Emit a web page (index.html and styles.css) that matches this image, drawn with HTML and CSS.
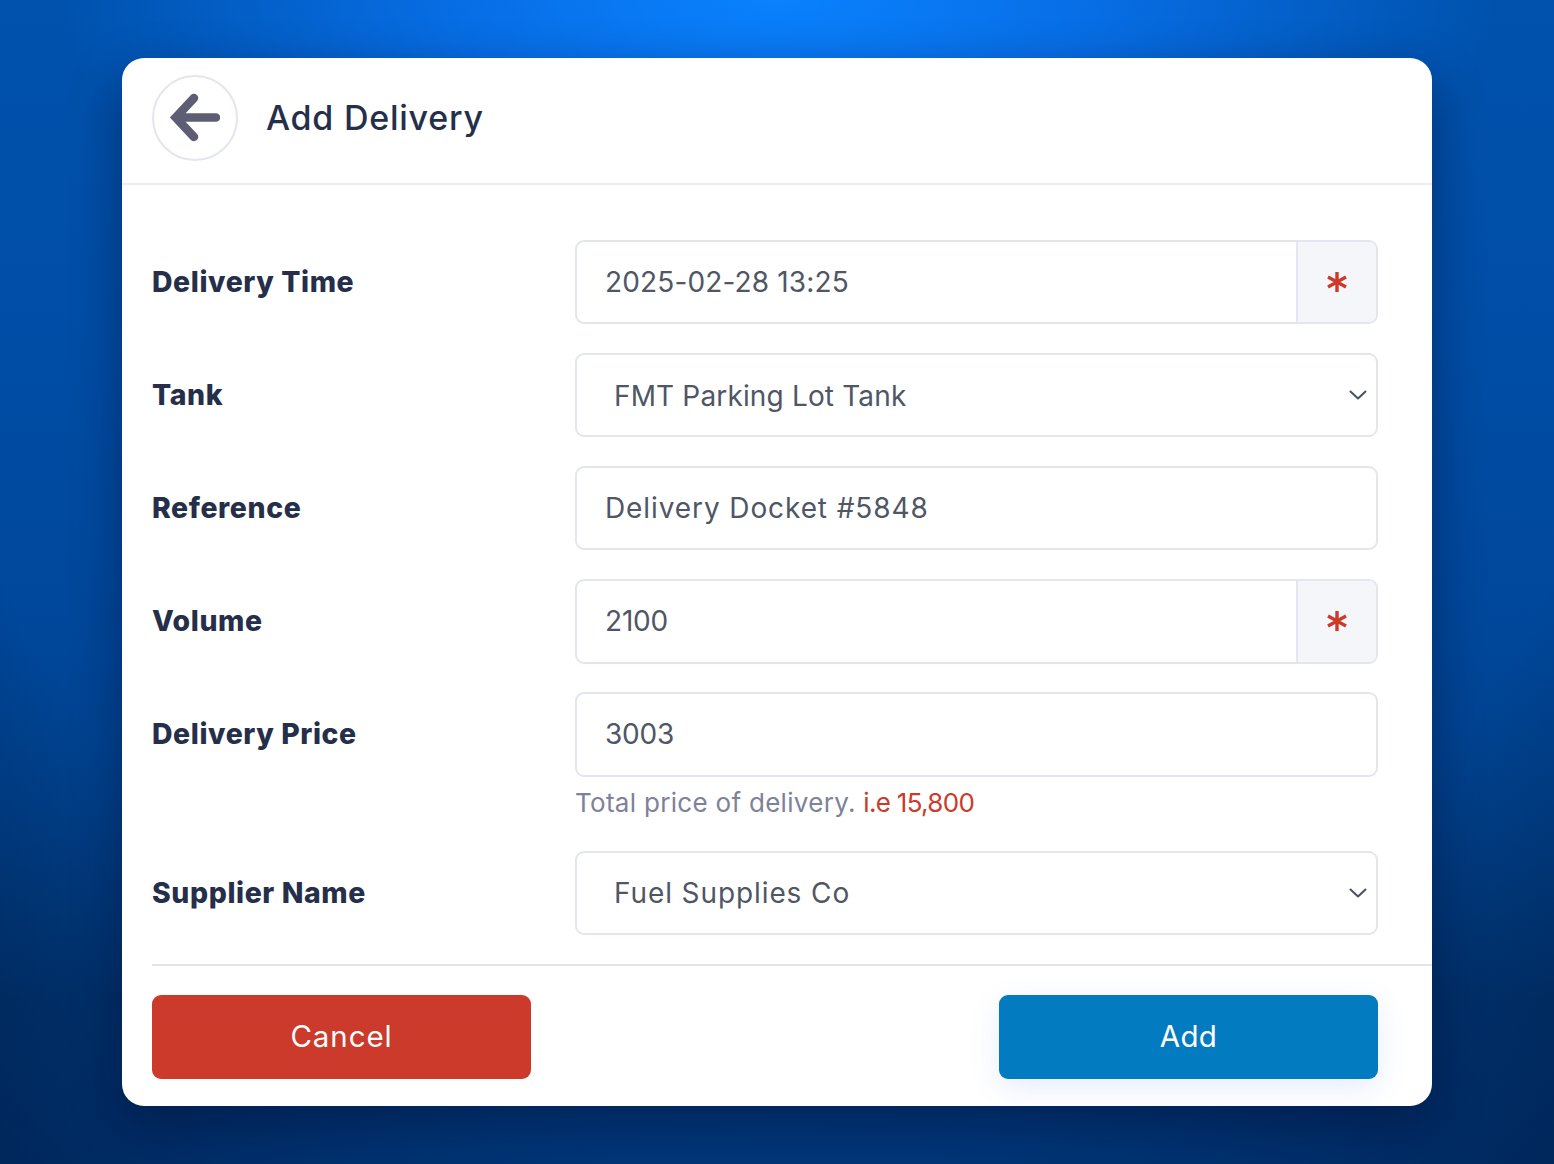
FILE: index.html
```html
<!DOCTYPE html>
<html lang="en">
<head>
<meta charset="utf-8">
<title>Add Delivery</title>
<link rel="stylesheet" href="styles.css">
</head>
<body>
<main class="card">
  <header class="head">
    <button class="back" type="button" aria-label="Back">
      <svg width="52" height="50" viewBox="0 0 52 50"><path d="M26 5 7.700 24.500 26 44M8 24.500h40" fill="none" stroke="#5d5e73" stroke-width="8.500" stroke-linecap="round" stroke-linejoin="miter"/></svg>
    </button>
    <h1 class="title">Add Delivery</h1>
  </header>
  <form class="form">
    <div class="row">
      <label class="label">Delivery Time</label>
      <div class="group"><span class="field">2025-02-28 13:25</span><span class="req"><svg width="20" height="20" viewBox="0 0 20 20"><path d="M10 0v20M1 5l18 10M19 5 1 15" stroke="#cb3a2b" stroke-width="3.400" fill="none"/></svg></span></div>
    </div>
    <div class="row">
      <label class="label">Tank</label>
      <div class="group select"><span class="field field-tight">FMT Parking Lot Tank</span><svg class="chev" width="20" height="12" viewBox="0 0 20 12"><path d="M2.500 2.500 10 9.500l7.500-7" fill="none" stroke="#4a5160" stroke-width="2" stroke-linecap="round" stroke-linejoin="round"/></svg></div>
    </div>
    <div class="row">
      <label class="label">Reference</label>
      <div class="group"><span class="field field-wide">Delivery Docket #5848</span></div>
    </div>
    <div class="row row-tall">
      <label class="label">Volume</label>
      <div class="group"><span class="field field-num">2100</span><span class="req"><svg width="20" height="20" viewBox="0 0 20 20"><path d="M10 0v20M1 5l18 10M19 5 1 15" stroke="#cb3a2b" stroke-width="3.400" fill="none"/></svg></span></div>
    </div>
    <div class="row row-help">
      <label class="label">Delivery Price</label>
      <div class="control">
        <div class="group"><span class="field field-num">3003</span></div>
        <p class="help">Total price of delivery. <span class="help-eg">i.e 15,800</span></p>
      </div>
    </div>
    <div class="row row-last">
      <label class="label">Supplier Name</label>
      <div class="group select"><span class="field field-wide">Fuel Supplies Co</span><svg class="chev" width="20" height="12" viewBox="0 0 20 12"><path d="M2.500 2.500 10 9.500l7.500-7" fill="none" stroke="#4a5160" stroke-width="2" stroke-linecap="round" stroke-linejoin="round"/></svg></div>
    </div>
    <footer class="foot">
      <button class="btn btn-cancel" type="button">Cancel</button>
      <button class="btn btn-add" type="button">Add</button>
    </footer>
  </form>
</main>
</body>
</html>
```
FILE: styles.css
```css
* { box-sizing: border-box; }
html, body { margin: 0; height: 100%; }
body {
  height: 1164px;
  padding: 58px 122px;
  overflow: hidden;
  font-family: "Inter", "Liberation Sans", sans-serif;
  background:
    radial-gradient(ellipse 1000px 1250px at 777px 0, rgba(0, 15, 45, 0) 90%, rgba(0, 15, 45, .4) 120%),
    radial-gradient(ellipse 720px 340px at 777px -10px, #0a82ff 0%, rgba(10, 120, 250, .72) 45%, rgba(0, 82, 175, 0) 100%),
    linear-gradient(180deg, #0052ad 0%, #004da6 30%, #00479a 55%, #003f88 72%, #003676 86%, #00387d 100%);
}
.card {
  height: 1048px;
  background: #fff;
  border-radius: 22px;
  box-shadow: 0 18px 50px rgba(0, 10, 40, .42);
}
.head {
  height: 127px;
  padding: 17px 30px 0;
  display: flex;
  align-items: flex-start;
  gap: 28px;
  border-bottom: 2px solid #ebedf2;
}
.back {
  width: 86px;
  height: 86px;
  border-radius: 50%;
  border: 2px solid #e4e6ef;
  background: #fff;
  padding: 0 2px 0 0;
  display: flex;
  align-items: center;
  justify-content: center;
}
.title {
  margin: 0;
  height: 86px;
  line-height: 85px;
  font-size: 34px;
  font-weight: 500;
  letter-spacing: .75px;
  color: #252f4a;
}
.form { padding: 55px 0 0 30px; }
.row {
  display: grid;
  grid-template-columns: 423px 803px;
  align-items: center;
  margin-bottom: 29px;
}
.row-tall { margin-bottom: 28px; }
.row-tall .group, .row-help .group { height: 85px; }
.row-tall .field, .row-tall .req, .row-help .field { padding-bottom: 2px; }
.row-help { align-items: start; margin-bottom: 0; }
.row-last { margin: 21px 0 29px; }
.label {
  padding-bottom: 2px;
  font-size: 28.4px;
  font-weight: 800;
  letter-spacing: .6px;
  color: #252f4a;
}
.row-help .label { padding-bottom: 0; line-height: 84px; }
.control { display: flex; flex-direction: column; }
.group {
  height: 84px;
  display: flex;
  align-items: stretch;
  border: 2px solid #e4e6ef;
  border-radius: 9px;
  background: #fff;
  overflow: hidden;
}
.field {
  flex: 1;
  display: flex;
  align-items: center;
  padding-left: 28px;
  font-size: 28px;
  letter-spacing: .15px;
  color: #4f5665;
}
.field-tight { letter-spacing: .15px; padding-top: 2px; }
.field-wide { letter-spacing: .9px; }
.field-num { letter-spacing: -.2px; }
.select .field { padding-left: 37px; }
.chev { align-self: center; margin-right: 8px; }
.req {
  width: 80px;
  display: flex;
  align-items: center;
  justify-content: center;
  background: #f5f6f9;
  border-left: 2px solid #e4e6ef;
}
.help {
  margin: 8px 0 0;
  line-height: 36px;
  height: 45px;
  font-size: 26px;
  letter-spacing: .3px;
  color: #7e8299;
}
.help-eg { color: #cb3a2b; letter-spacing: -.7px; }
.foot {
  display: flex;
  justify-content: space-between;
  padding: 29px 54px 0 0;
  border-top: 2px solid #e4e4e4;
}
.btn {
  width: 379px;
  height: 84px;
  border: 0;
  border-radius: 9px;
  padding-bottom: 3px;
  font-family: inherit;
  font-size: 29.5px;
  color: #fff;
}
.btn-cancel { background: #cb3a2b; letter-spacing: .9px; }
.btn-add { background: #027bc0; letter-spacing: .4px; box-shadow: 0 9px 30px rgba(60, 110, 240, .12); }
```
